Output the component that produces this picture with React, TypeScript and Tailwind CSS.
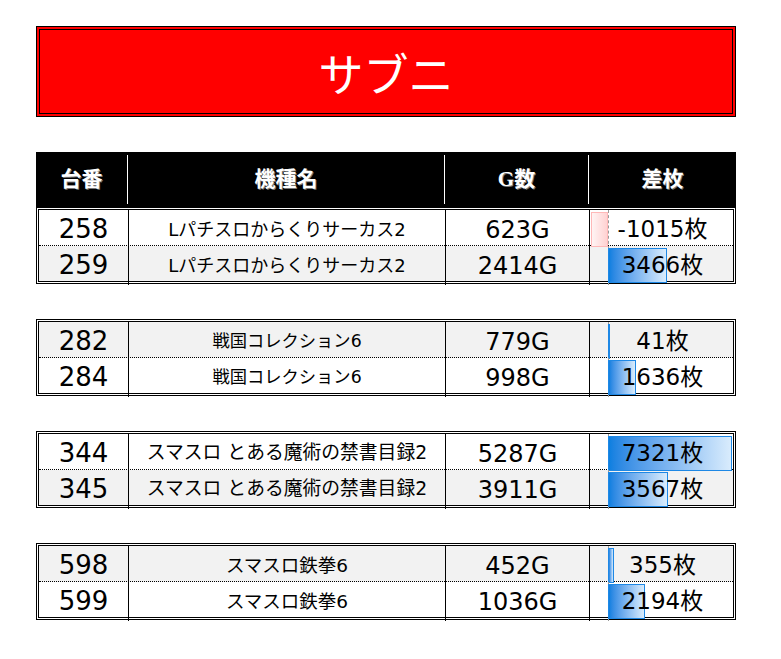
import React from "react";

type Row = { no: number; name: string; size: string; g: number; diff: number; shade: boolean };

const groups: Row[][] = [
  [
    { no: 258, name: "Lパチスロからくりサーカス2", size: "text-[18px]", g: 623, diff: -1015, shade: false },
    { no: 259, name: "Lパチスロからくりサーカス2", size: "text-[18px]", g: 2414, diff: 3466, shade: true },
  ],
  [
    { no: 282, name: "戦国コレクション6", size: "text-[17.3px]", g: 779, diff: 41, shade: true },
    { no: 284, name: "戦国コレクション6", size: "text-[17.3px]", g: 998, diff: 1636, shade: false },
  ],
  [
    { no: 344, name: "スマスロ とある魔術の禁書目録2", size: "text-[18.8px]", g: 5287, diff: 7321, shade: false },
    { no: 345, name: "スマスロ とある魔術の禁書目録2", size: "text-[18.8px]", g: 3911, diff: 3567, shade: true },
  ],
  [
    { no: 598, name: "スマスロ鉄拳6", size: "text-[18.5px]", g: 452, diff: 355, shade: true },
    { no: 599, name: "スマスロ鉄拳6", size: "text-[18.5px]", g: 1036, diff: 2194, shade: false },
  ],
];

// px per 枚 for the data bars (7321 fills the cell)
const SCALE = 124 / 7321;

const DiffCell = ({ diff }: { diff: number }) => {
  const w = Math.max(1, Math.round(Math.abs(diff) * SCALE));
  return (
    <div className="relative flex items-center justify-center h-full">
      {/* axis */}
      <div className="absolute left-[18px] top-0 bottom-0 border-l border-dashed border-[#9a9a9a]" />
      {diff >= 0 ? (
        <div
          className="absolute left-[18px] top-[2px] bottom-[2px] border border-[#1e88e5] bg-gradient-to-r from-[#0a7fe0] to-[#d9ecfc]"
          style={{ width: w }}
        />
      ) : (
        <div
          className="absolute top-[2px] bottom-[2px] border border-[#ffb8b8] bg-gradient-to-l from-[#ffd2d2] to-[#fff4f4]"
          style={{ width: w, left: 18 - w }}
        />
      )}
      <span className="relative text-[23px] pl-[2px]">{diff}枚</span>
    </div>
  );
};

const Group = ({ rows }: { rows: Row[] }) => (
  <div className="border-[3px] border-double border-black">
    {rows.map((r, i) => (
      <div
        key={r.no}
        className={`grid grid-cols-[90px_317px_144px_143px] ${
          i === 0 ? "h-[36px] border-b border-dotted border-black" : "h-[35px]"
        } ${r.shade ? "bg-[#f2f2f2]" : "bg-white"}`}
      >
        <div className="flex items-center justify-center border-r border-black text-[26px]">{r.no}</div>
        <div className={`flex items-center justify-center border-r border-black ${r.size}`}>{r.name}</div>
        <div className="flex items-center justify-center border-r border-black text-[24px]">{r.g}G</div>
        <DiffCell diff={r.diff} />
      </div>
    ))}
  </div>
);

export default function App() {
  return (
    <div className="min-h-screen bg-white pt-[26px] pl-[36px] text-black font-['DejaVu_Sans','Noto_Sans_CJK_JP',sans-serif]">
      <div className="w-[700px]">
        {/* Title */}
        <div className="h-[91px] border-[4px] border-double border-black bg-[#ff0000] flex items-center justify-center">
          <span className="text-white text-[45px] leading-none font-['Noto_Sans_CJK_JP',sans-serif] pt-[2px]">サブニ</span>
        </div>

        {/* Header */}
        <div className="mt-[35px] h-[55px] bg-black grid grid-cols-[92px_317px_144px_147px] text-white font-bold text-[21px] font-['Liberation_Serif','Noto_Sans_CJK_JP',serif] [text-shadow:1px_1px_0_#777]">
          <div className="flex items-center justify-center border-r border-white my-[3px]">台番</div>
          <div className="flex items-center justify-center border-r border-white my-[3px]">機種名</div>
          <div className="flex items-center justify-center border-r border-white my-[3px]">G数</div>
          <div className="flex items-center justify-center">差枚</div>
        </div>

        <div className="flex flex-col gap-[35px]">
          {groups.map((g, i) => (
            <Group key={i} rows={g} />
          ))}
        </div>
      </div>
    </div>
  );
}
